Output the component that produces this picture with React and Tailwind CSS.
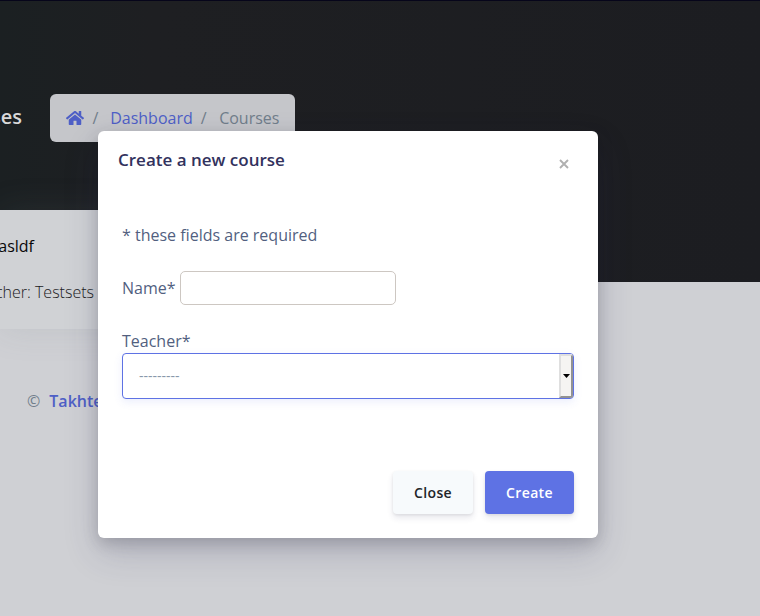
function HomeIcon({ className }) {
  return (
    <svg className={className} viewBox="0 0 576 512" fill="currentColor" aria-hidden="true">
      <path d="M488 312.7V456c0 13.3-10.7 24-24 24H348c-6.6 0-12-5.4-12-12V356c0-6.6-5.4-12-12-12h-72c-6.6 0-12 5.4-12 12v112c0 6.6-5.4 12-12 12H112c-13.3 0-24-10.7-24-24V312.7c0-3.6 1.6-7 4.4-9.3l188-154.8c4.4-3.6 10.8-3.6 15.3 0l188 154.8c2.7 2.3 4.3 5.7 4.3 9.3zm83.6-60.9L488 182.9V44.4c0-6.6-5.4-12-12-12h-56c-6.6 0-12 5.4-12 12V117l-89.5-73.7c-17.7-14.6-43.3-14.6-61 0L4.4 251.8c-5.1 4.2-5.8 11.8-1.6 16.9l25.5 31c4.2 5.1 11.8 5.8 16.9 1.6l235.2-193.7c4.4-3.6 10.8-3.6 15.3 0l235.2 193.7c5.1 4.2 12.7 3.5 16.9-1.6l25.5-31c4.2-5.2 3.4-12.7-1.7-16.9z" />
    </svg>
  );
}

function Header() {
  return (
    <header className="h-[282px] border-t border-[#06051a] bg-linear-to-r from-[#1b2022] via-[#1e1f22] via-20% to-[#1c1d21] pt-[93px]">
      <div className="flex h-12 items-center">
        <h6 className="flex w-[22px] shrink-0 justify-end whitespace-nowrap pb-[2px] text-xl leading-6 font-semibold text-[#d8d8d9]">
          Courses
        </h6>
        <nav className="ml-7 flex h-12 w-[245px] items-center rounded-md bg-[#c5c6ca] pl-4 leading-6 text-[#717e8b]">
          <HomeIcon className="h-4 w-[18px] text-[#4e5fc6]" />
          <span className="ml-[8.5px]">/</span>
          <a className="ml-[11.8px] text-[#4e5fc6]">Dashboard</a>
          <span className="ml-2">/</span>
          <span className="ml-[12.5px]">Courses</span>
        </nav>
      </div>
    </header>
  );
}

function CourseCard() {
  return (
    <section className="relative -mt-[72px] h-[119px] w-[340px] bg-[#d0d2d5] pt-6 shadow-[0_0_32px_0_rgba(110,120,130,0.15)]">
      <div className="flex w-[34px] justify-end whitespace-nowrap leading-6 text-[#08080a]">asldf</div>
      <div className="mt-[22px] flex w-[94px] justify-end whitespace-nowrap leading-6 font-light text-[#202023]">
        Teacher: Testsets
      </div>
    </section>
  );
}

function Modal() {
  return (
    <div
      role="dialog"
      className="absolute top-[131px] left-[98px] flex h-[407px] w-[500px] flex-col rounded-md bg-white shadow-[0_15px_35px_rgba(50,50,93,0.2),0_5px_15px_rgba(0,0,0,0.17)]"
    >
      <div className="flex items-start justify-between px-5 pt-4">
        <h5 className="text-[17px] leading-[26px] font-semibold text-[#32325d]">Create a new course</h5>
        <button className="mt-[12px] mr-[9px]" aria-label="Close dialog">
          <svg className="h-[10px] w-[10px]" viewBox="0 0 10 10" fill="none" stroke="#b0b0b0" strokeWidth="1.9">
            <path d="M1 1l8 8M9 1L1 9" />
          </svg>
        </button>
      </div>
      <div className="px-6 pt-[50px] leading-6 text-[#525f7f]">
        <p>* these fields are required</p>
        <div className="mt-6 flex items-center">
          <label>Name*</label>
          <input className="ml-1 h-[34px] w-[216px] rounded-[5px] border border-[#cdc7c2] bg-white px-2 outline-none" />
        </div>
        <div className="mt-6">
          <label className="block">Teacher*</label>
          <div className="flex h-[46px] items-stretch justify-between overflow-hidden rounded-[4px] border border-[#5e72e4] bg-white shadow-[0_3px_9px_rgba(94,114,228,0.12)]">
            <span className="pt-[10px] pl-4 text-sm leading-6 text-[#8898aa]">---------</span>
            <span className="flex w-[14px] items-center justify-center border-2 border-t-[#dfdfdf] border-r-[#929292] border-b-[#929292] border-l-[#dfdfdf] bg-[#f5f4f2]">
              <svg className="h-[4px] w-[7px] shrink-0" viewBox="0 0 7 4">
                <path d="M0 0h7L3.5 4z" fill="#000" />
              </svg>
            </span>
          </div>
        </div>
      </div>
      <div className="mt-[72px] flex justify-end gap-3 px-6 text-sm font-semibold tracking-[0.35px]">
        <button className="h-[43px] w-20 rounded-[4px] bg-[#f7fafc] text-[#212529] shadow-[0_4px_6px_rgba(50,50,93,0.11),0_1px_3px_rgba(0,0,0,0.08)]">
          Close
        </button>
        <button className="h-[43px] w-[89px] rounded-[4px] bg-[#5e72e4] text-white shadow-[0_4px_6px_rgba(50,50,93,0.11),0_1px_3px_rgba(0,0,0,0.08)]">
          Create
        </button>
      </div>
    </div>
  );
}

export default function App() {
  return (
    <div className="relative h-[616px] w-[760px] overflow-hidden bg-[#cfd0d4] font-['Open_Sans',sans-serif] text-base">
      <Header />
      <CourseCard />
      <footer className="mt-[60px] flex gap-[9px] pl-[27px] leading-6 text-[#717e8b]">
        <span>©</span>
        <a className="font-semibold text-[#4e5fc6]">Takhte</a>
      </footer>
      <Modal />
    </div>
  );
}
